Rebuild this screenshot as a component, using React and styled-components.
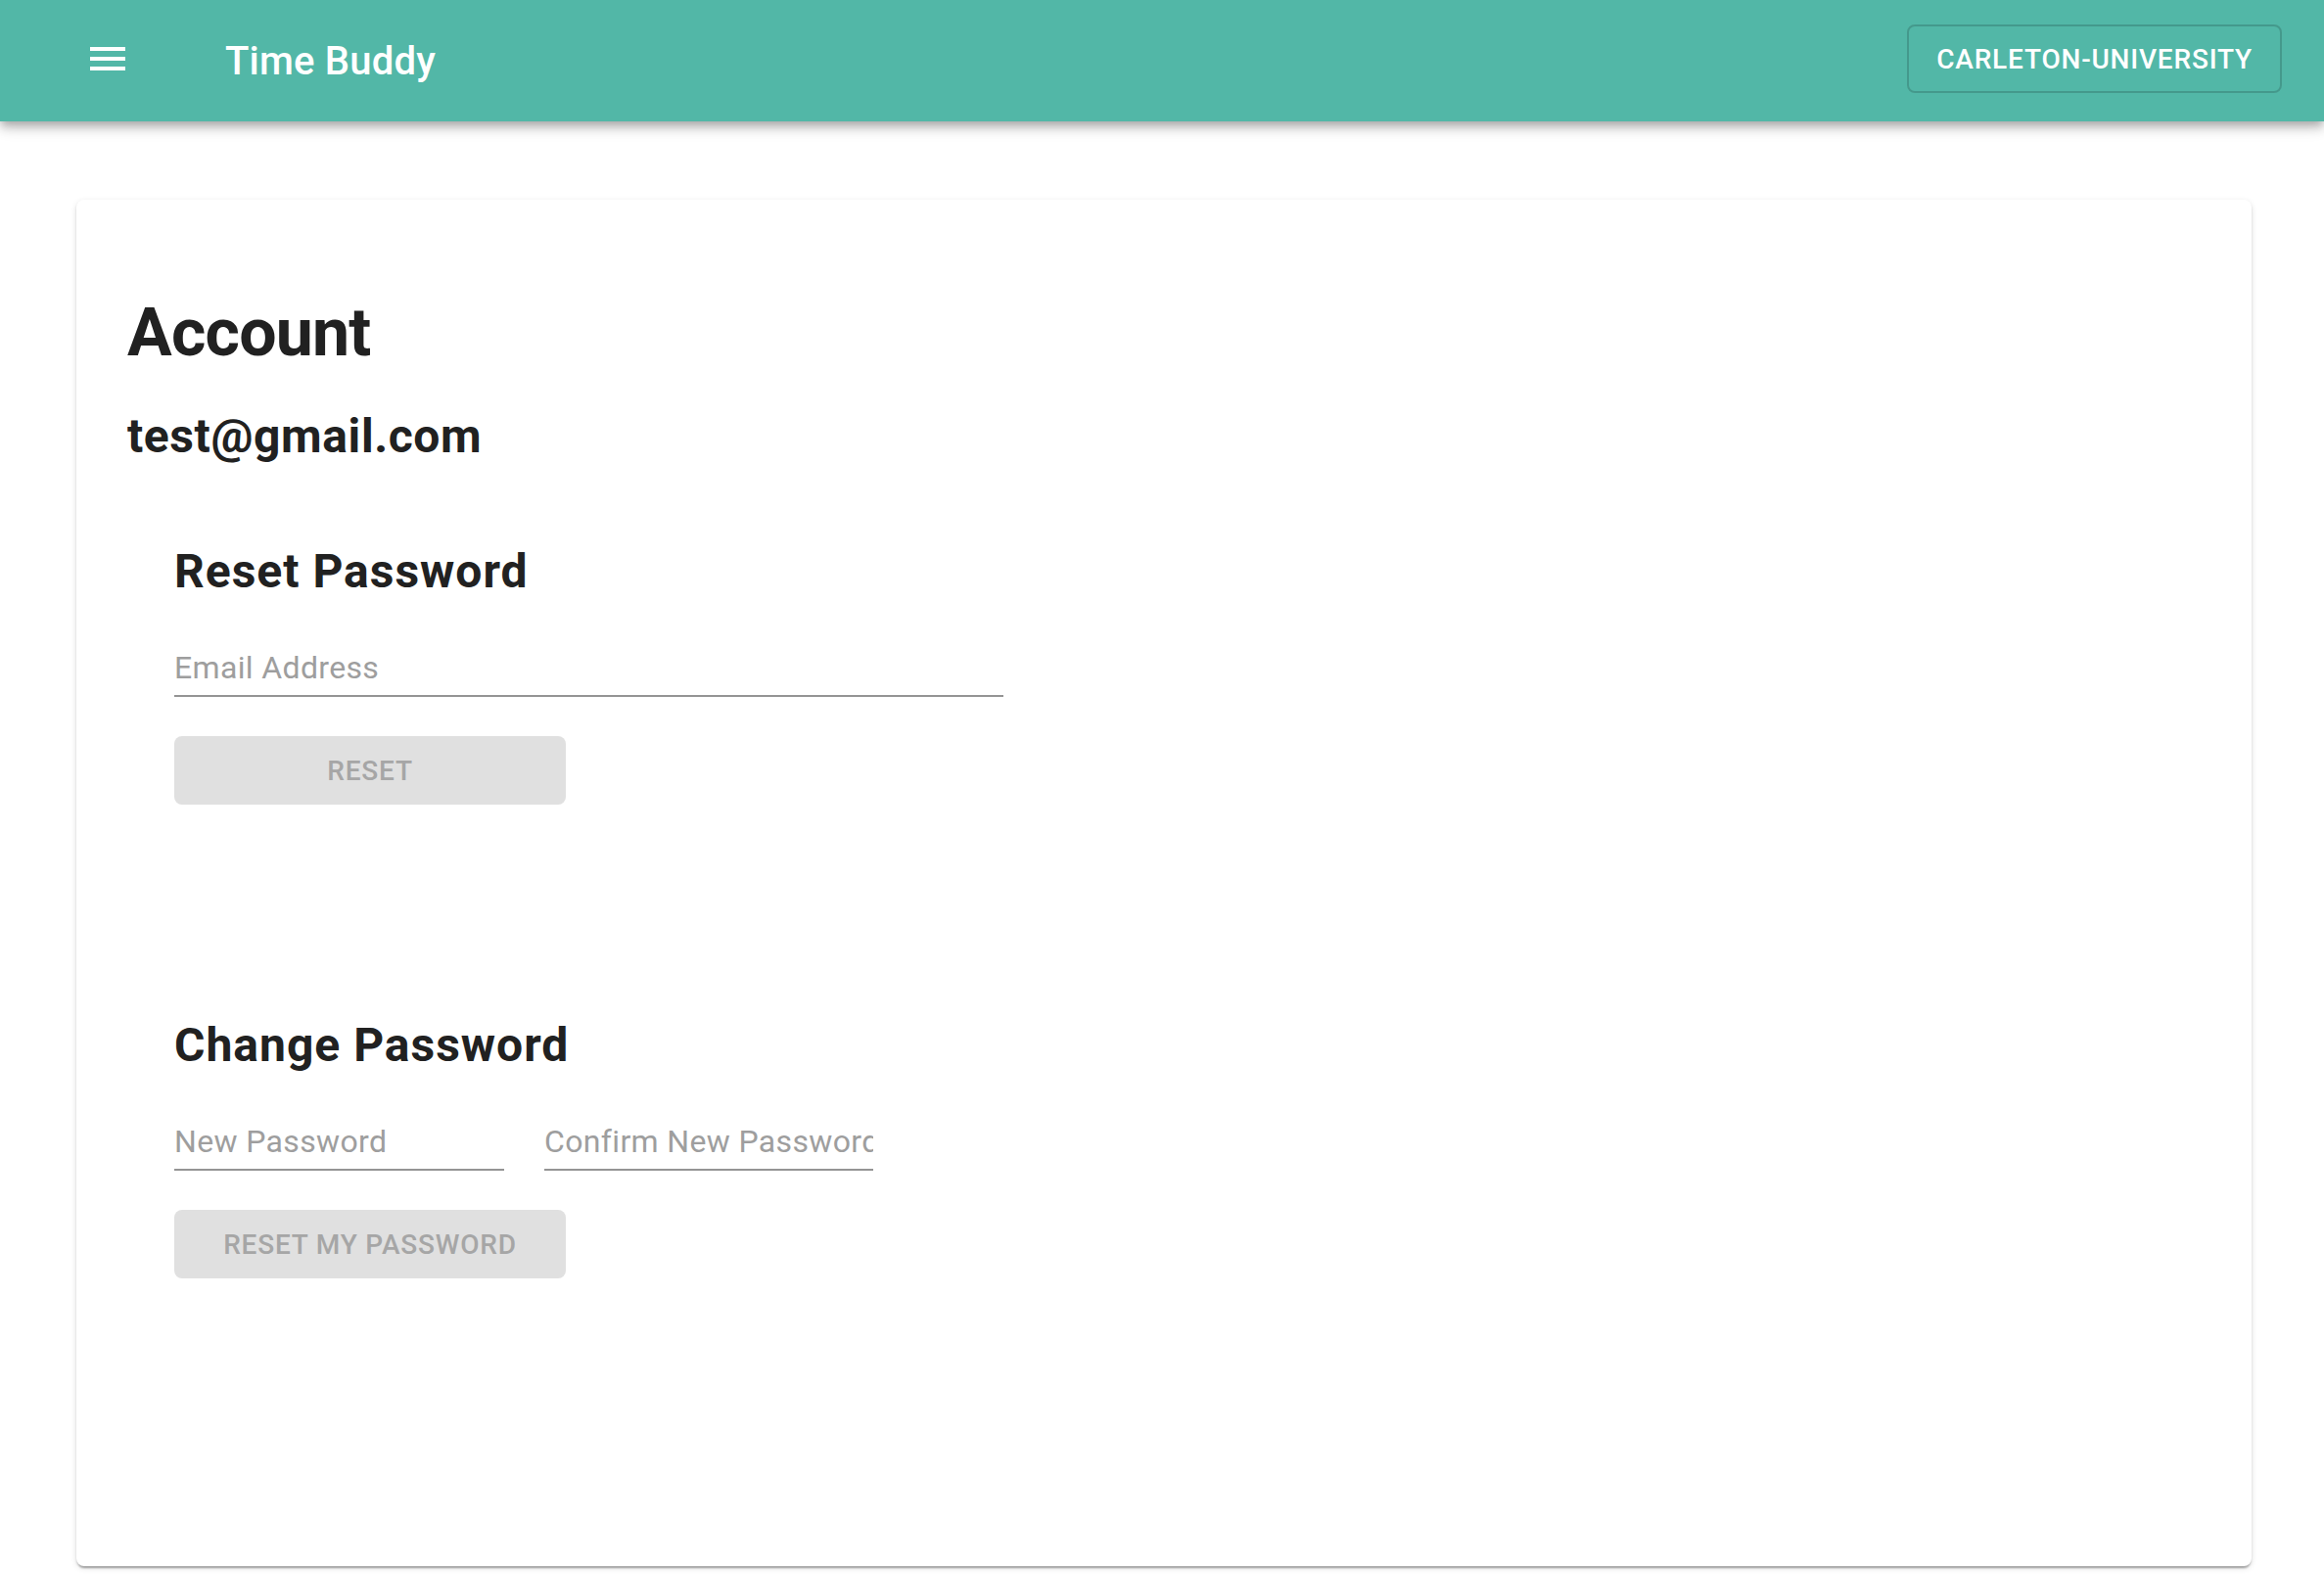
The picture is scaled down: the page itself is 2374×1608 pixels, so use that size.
import styled, { createGlobalStyle } from "styled-components";

const GlobalStyle = createGlobalStyle`
  html, body {
    margin: 0;
    padding: 0;
    background: #fff;
    font-family: Roboto, "Liberation Sans", Arial, sans-serif;
  }
  * {
    box-sizing: border-box;
  }
`;

const AppBar = styled.header`
  height: 124px;
  background-color: #52b7a7;
  display: flex;
  align-items: center;
  padding: 0 43px 0 86px;
  box-shadow: 0 4px 8px -2px rgba(0, 0, 0, 0.2), 0 8px 10px 0 rgba(0, 0, 0, 0.14),
    0 2px 20px 0 rgba(0, 0, 0, 0.12);
  position: relative;
  z-index: 1;
`;

const MenuButton = styled.button`
  width: 48px;
  height: 48px;
  padding: 0;
  margin: -4px 96px 0 0;
  border: none;
  background: transparent;
  color: #fff;
  display: flex;
  align-items: center;
  justify-content: center;
  cursor: pointer;
`;

const Brand = styled.h1`
  flex: 1;
  margin: 0;
  font-size: 40px;
  font-weight: 500;
  color: #fff;
  letter-spacing: 0.2px;
`;

const OrgButton = styled.button`
  height: 70px;
  margin-top: -4px;
  padding: 0 28px;
  border: 2px solid rgba(0, 0, 0, 0.16);
  border-radius: 8px;
  background: transparent;
  color: #fff;
  font-family: inherit;
  font-size: 28px;
  font-weight: 500;
  letter-spacing: 0.8px;
  text-transform: uppercase;
  cursor: pointer;
`;

const Main = styled.main`
  padding: 80px 74px 8px 78px;
`;

const Card = styled.section`
  min-height: 1396px;
  background: #fff;
  border-radius: 8px;
  padding: 96px 52px 0;
  box-shadow: 0 4px 2px -2px rgba(0, 0, 0, 0.2), 0 2px 2px 0 rgba(0, 0, 0, 0.14),
    0 2px 6px 0 rgba(0, 0, 0, 0.12);
`;

const Title = styled.h2`
  margin: 0;
  font-size: 68px;
  line-height: 80px;
  font-weight: 700;
  letter-spacing: -0.8px;
  color: #212121;
`;

const UserEmail = styled.h3`
  margin: 38px 0 0;
  font-size: 48px;
  line-height: 56px;
  font-weight: 700;
  letter-spacing: 0.6px;
  color: #212121;
`;

const Section = styled.div`
  padding-left: 48px;
  margin-top: ${(props) => props.$gap}px;
`;

const SectionTitle = styled.h3`
  margin: 0;
  font-size: 48px;
  line-height: 56px;
  font-weight: 700;
  letter-spacing: 1px;
  color: #212121;
`;

const FieldRow = styled.div`
  display: flex;
  gap: 41px;
  margin-top: 39px;
`;

const Field = styled.input`
  width: ${(props) => props.$width}px;
  padding: 12px 0 9px;
  border: none;
  border-bottom: 2px solid #949494;
  background: transparent;
  font-family: inherit;
  font-size: 32px;
  line-height: 38px;
  letter-spacing: 0.35px;
  color: #212121;
  outline: none;

  &::placeholder {
    color: #9e9e9e;
    opacity: 1;
  }
`;

const ActionButton = styled.button`
  display: block;
  width: 400px;
  height: 70px;
  margin-top: 40px;
  border: none;
  border-radius: 8px;
  background-color: #e0e0e0;
  color: #a6a6a6;
  font-family: inherit;
  font-size: 28px;
  font-weight: 500;
  letter-spacing: 0.8px;
  text-transform: uppercase;
`;

const MenuIcon = () => (
  <svg width="48" height="48" viewBox="0 0 24 24" fill="currentColor">
    <path d="M3 18h18v-2H3v2zm0-5h18v-2H3v2zm0-7v2h18V6H3z" />
  </svg>
);

const App = () => {
  return (
    <>
      <GlobalStyle />
      <AppBar>
        <MenuButton aria-label="menu">
          <MenuIcon />
        </MenuButton>
        <Brand>Time Buddy</Brand>
        <OrgButton>carleton-university</OrgButton>
      </AppBar>
      <Main>
        <Card>
          <Title>Account</Title>
          <UserEmail>test@gmail.com</UserEmail>

          <Section $gap={82}>
            <SectionTitle>Reset Password</SectionTitle>
            <FieldRow>
              <Field $width={847} placeholder="Email Address" />
            </FieldRow>
            <ActionButton disabled>Reset</ActionButton>
          </Section>

          <Section $gap={218}>
            <SectionTitle>Change Password</SectionTitle>
            <FieldRow>
              <Field $width={337} type="password" placeholder="New Password" />
              <Field $width={336} type="password" placeholder="Confirm New Password" />
            </FieldRow>
            <ActionButton disabled>Reset my password</ActionButton>
          </Section>
        </Card>
      </Main>
    </>
  );
};

export default App;
